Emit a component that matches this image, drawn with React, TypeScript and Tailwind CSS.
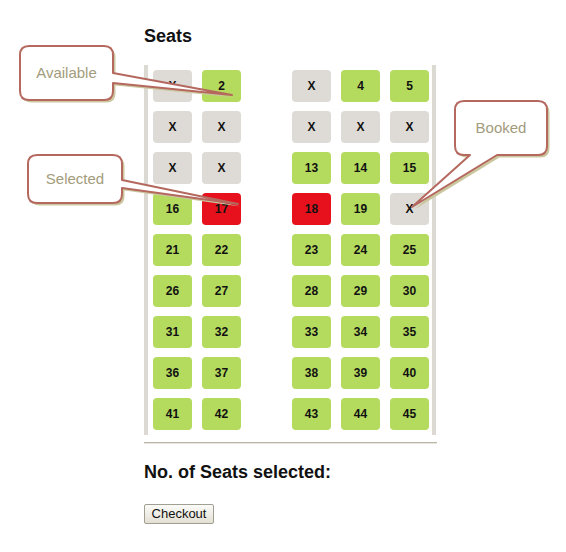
import React from 'react'

type Seat = { n: number; state: 'free' | 'booked' | 'picked' }

const BOOKED = [1, 3, 6, 7, 8, 9, 10, 11, 12, 20]
const PICKED = [17, 18]

const rows: Seat[][] = Array.from({ length: 9 }, (_, r) =>
  Array.from({ length: 5 }, (_, c) => {
    const n = r * 5 + c + 1
    const state = BOOKED.includes(n) ? 'booked' : PICKED.includes(n) ? 'picked' : 'free'
    return { n, state }
  })
)

const seatTone = {
  free: 'bg-[#b4da5e]',
  booked: 'bg-[#dedbd6]',
  picked: 'bg-[#e6111d]',
}

function SeatBox({ seat }: { seat: Seat }) {
  return (
    <div
      className={`flex h-[32px] w-[39px] items-center justify-center rounded-[4px] text-[12px] font-bold text-[#111] ${seatTone[seat.state]}`}
    >
      {seat.state === 'booked' ? 'X' : seat.n}
    </div>
  )
}

const CALLOUTS = [
  {
    label: 'Available',
    d: 'M29 46 H104 Q113 46 113 55 V73 L232 95 L113 83 V91 Q113 100 104 100 H29 Q20 100 20 91 V55 Q20 46 29 46 Z',
    box: 'left-[20px] top-[46px] w-[93px] h-[54px]',
  },
  {
    label: 'Selected',
    d: 'M37 155 H113 Q122 155 122 164 V180 L238 204 L122 188 V194 Q122 203 113 203 H37 Q28 203 28 194 V164 Q28 155 37 155 Z',
    box: 'left-[28px] top-[155px] w-[94px] h-[48px]',
  },
  {
    label: 'Booked',
    d: 'M464 101 H538 Q547 101 547 110 V146 Q547 155 538 155 H497 L412 207 L470 155 H464 Q455 155 455 146 V110 Q455 101 464 101 Z',
    box: 'left-[455px] top-[101px] w-[92px] h-[54px]',
  },
]

export default function App() {
  return (
    <div className="relative h-[552px] w-[566px] bg-white font-['Liberation_Sans',Arial,sans-serif] text-[#111]">
      <div className="ml-[144px] w-[293px] pt-[26px]">
        <h2 className="text-[18px] font-bold leading-[21px]">Seats</h2>

        <div className="mt-[18px] flex w-[292px] gap-[51px] border-x-4 border-[#dcd9d3] pb-[5px] pl-[5px] pr-[3px] pt-[5px]">
          <div className="grid grid-cols-[39px_39px] gap-x-[10px] gap-y-[9px]">
            {rows.flatMap((r) => r.slice(0, 2)).map((s) => (
              <SeatBox key={s.n} seat={s} />
            ))}
          </div>
          <div className="grid grid-cols-[39px_39px_39px] gap-x-[10px] gap-y-[9px]">
            {rows.flatMap((r) => r.slice(2)).map((s) => (
              <SeatBox key={s.n} seat={s} />
            ))}
          </div>
        </div>

        <div className="mt-[7px] h-[2px] w-[293px] border-t border-[#b9b6a8] bg-[#e8e6de]" />

        <h3 className="mt-[18px] text-[18px] font-bold leading-[21px]">No. of Seats selected:</h3>

        <button className="mt-[21px] h-[20px] w-[70px] rounded-[2px] border border-[#a19e92] bg-gradient-to-b from-[#fbfbf8] to-[#e3e0d3] text-[13px] leading-[18px] text-[#111]">
          Checkout
        </button>
      </div>

      {/* callout bubbles lie over the seat map */}
      <svg className="pointer-events-none absolute left-0 top-0" width="566" height="552">
        {CALLOUTS.map((c) => (
          <g key={c.label}>
            <path d={c.d} transform="translate(2.5 2.5)" fill="#cbc79f" />
            <path d={c.d} fill="#fff" stroke="#b4685e" strokeWidth="2" strokeLinejoin="round" />
          </g>
        ))}
      </svg>
      {CALLOUTS.map((c) => (
        <div
          key={c.label}
          className={`absolute flex items-center justify-center text-[15px] text-[#a29c7c] ${c.box}`}
        >
          {c.label}
        </div>
      ))}
    </div>
  )
}
